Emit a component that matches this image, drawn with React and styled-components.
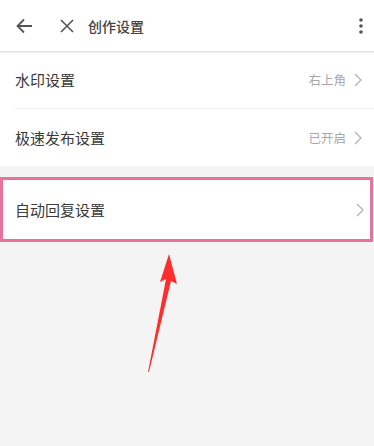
import React from 'react';
import styled, { createGlobalStyle } from 'styled-components';

const GlobalStyle = createGlobalStyle`
  html, body {
    margin: 0;
    padding: 0;
    background: #f4f4f4;
    font-family: "Noto Sans CJK SC", "Noto Sans", sans-serif;
  }
`;

const Page = styled.div`
  position: relative;
  width: 374px;
  height: 446px;
  background: #f4f4f4;
  overflow: hidden;
`;

const Toolbar = styled.header`
  display: flex;
  align-items: center;
  height: 51px;
  padding: 0 8px 0 15px;
  background: #fff;
  box-shadow: 0 1px 2px rgba(0, 0, 0, 0.18);
  position: relative;
  z-index: 1;
`;

const IconButton = styled.span`
  display: flex;
  align-items: center;
  justify-content: center;
  width: ${props => props.$w || 20}px;
  margin-right: ${props => props.$mr || 0}px;
  color: #555;
`;

const Title = styled.h1`
  flex: 1;
  margin: 0;
  font-size: 14px;
  font-weight: 500;
  color: #444;
`;

const Group = styled.section`
  background: #fff;
  margin-top: ${props => props.$mt || 0}px;
`;

const Row = styled.div`
  display: flex;
  align-items: center;
  height: ${props => props.$h || 56}px;
  margin-left: ${props => props.$ml ?? 15}px;
  padding-right: ${props => props.$pr ?? 12}px;
  border-bottom: ${props => (props.$divider ? '1px solid #ececec' : 'none')};
`;

const Label = styled.span`
  flex: 1;
  font-size: 15px;
  color: #3a3a3a;
`;

const Value = styled.span`
  font-size: 12.5px;
  color: #a8a8a8;
  margin-right: 8px;
`;

const Highlight = styled.div`
  border: 3px solid #e8739a;
  margin-right: 1px;
  background: #fff;
`;

const ArrowMark = styled.svg`
  position: absolute;
  left: 140px;
  top: 250px;
`;

const Chevron = () => (
  <svg width="8" height="14" viewBox="0 0 8 14">
    <path d="M1 1l6 6-6 6" fill="none" stroke="#b0b0b0" strokeWidth="1.2" />
  </svg>
);

export default function App() {
  return (
    <Page>
      <GlobalStyle />
      <Toolbar>
        <IconButton $w={18} $mr={26}>
          <svg width="17" height="16" viewBox="0 0 17 16">
            <path d="M16 8H2M8 1.5L1.5 8 8 14.5" fill="none" stroke="#555" strokeWidth="1.8" />
          </svg>
        </IconButton>
        <IconButton $w={16} $mr={13}>
          <svg width="14" height="14" viewBox="0 0 14 14">
            <path d="M1 1l12 12M13 1L1 13" fill="none" stroke="#555" strokeWidth="1.6" />
          </svg>
        </IconButton>
        <Title>创作设置</Title>
        <IconButton $w={10}>
          <svg width="6" height="18" viewBox="0 0 6 18">
            <circle cx="3" cy="3" r="1.8" fill="#555" />
            <circle cx="3" cy="9" r="1.8" fill="#555" />
            <circle cx="3" cy="15" r="1.8" fill="#555" />
          </svg>
        </IconButton>
      </Toolbar>
      <Group>
        <Row $h={57} $divider>
          <Label>水印设置</Label>
          <Value>右上角</Value>
          <Chevron />
        </Row>
        <Row $h={57}>
          <Label>极速发布设置</Label>
          <Value>已开启</Value>
          <Chevron />
        </Row>
      </Group>
      <Group $mt={11}>
        <Highlight>
          <Row $h={59} $ml={12} $pr={6}>
            <Label>自动回复设置</Label>
            <Chevron />
          </Row>
        </Highlight>
      </Group>
      <ArrowMark width="40" height="126" viewBox="0 0 40 126">
        <polygon points="29,4 37,34 31,31 9,122 8,122 26,29 20,32" fill="#ff2d2d" />
      </ArrowMark>
    </Page>
  );
}
